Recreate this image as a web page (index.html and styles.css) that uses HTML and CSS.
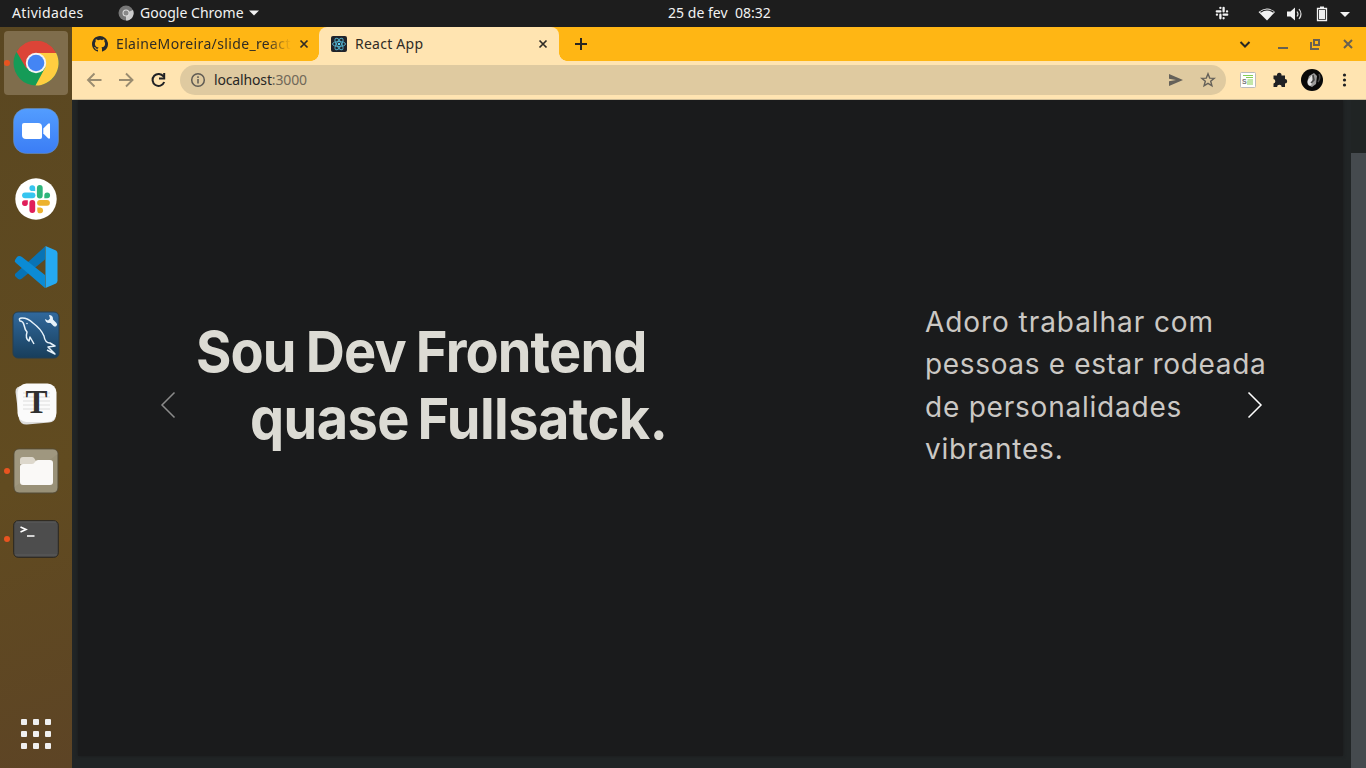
FILE: index.html
```html
<!DOCTYPE html>
<html lang="pt-BR">
<head>
<meta charset="utf-8">
<title>React App</title>
<link rel="stylesheet" href="styles.css">
</head>
<body>
<div class="desktop">
  <header class="topbar">
    <span class="activities">Atividades</span>
    <span class="app-menu">
      <svg width="16" height="16" viewBox="0 0 16 16"><circle cx="8" cy="8" r="7.500" fill="#777"/><path d="M8 8 15 5A7.500 7.500 0 0 1 8 15.500Z" fill="#ccc"/><circle cx="8" cy="8" r="3.500" fill="#ddd"/><circle cx="8" cy="8" r="2.500" fill="#888"/></svg>
      <span class="app-name">Google Chrome</span>
      <svg width="10" height="6" viewBox="0 0 10 6"><path d="M0 .5h10L5 5.500Z" fill="#f2f2f2"/></svg>
    </span>
    <span class="clock">25 de fev&nbsp; 08:32</span>
    <svg class="tray" width="138" height="20" viewBox="0 0 138 20">
      <g stroke="#f2f2f2" stroke-width="2.300" stroke-linecap="round"><path d="M6.400 7.400H2.800M6.400 3.800v.1M9.600 3.800v3.600M13 7.400h.1M9.600 10.700h3.600M9.600 14.300v-.1M6.400 10.700v3.600M3 10.700h-.1"/></g>
      <path d="M44.500 8Q53 1 61 8L53 16.500Z" fill="#f2f2f2"/><path d="M46.500 8.200Q53 3.800 59.500 8.200" fill="none" stroke="#1d1d1d" stroke-width="1.200"/>
      <path d="M73 7.500h3.500L81 3.500v13L76.500 12.500H73Z" fill="#f2f2f2"/><path d="M83 7.500q2 2.500 0 5M85 5q4 5 0 10" fill="none" stroke="#ddd" stroke-width="1.200"/>
      <path d="M103.500 4.500h9v12h-9ZM106 3.200h4" fill="none" stroke="#f2f2f2" stroke-width="1.300"/><path d="M105 6h6v9h-6Z" fill="#eee"/>
      <path d="M126 8h10l-5 5Z" fill="#f2f2f2"/>
    </svg>
  </header>
  <div class="workspace">
    <nav class="dock">
      <div class="slot active"><i class="dot"></i>
        <svg width="46" height="46" viewBox="0 0 46 46"><circle cx="23" cy="23" r="22.500" fill="#159b57"/><path d="M3.500 11.800A22.500 22.500 0 0 1 42.500 11.800L43 13H23L13.400 28.500Z" fill="#dc4437"/><path d="M23 13h20.200A22.500 22.500 0 0 1 22.500 45.500L32.500 27Z" fill="#ffcd40"/><circle cx="23" cy="23" r="10.200" fill="#f4f4f4"/><circle cx="23" cy="23" r="8.300" fill="#4485f4"/></svg>
      </div>
      <div class="slot">
        <svg width="46" height="46" viewBox="0 0 46 46"><defs><linearGradient id="zoom" x2="0" y2="1"><stop stop-color="#539dff"/><stop offset="1" stop-color="#3b7df5"/></linearGradient></defs><rect x=".5" y=".5" width="45" height="45" rx="13" fill="url(#zoom)" stroke="#6d8fb4" stroke-width=".6"/><path d="M11 15h14q4 0 4 4v10q0 2-2 2H13q-4 0-4-4V17q0-2 2-2Z" fill="#fff"/><path d="m30.300 20.500 5-5h1.700v15h-1.700l-5-5Z" fill="#fff"/></svg>
      </div>
      <div class="slot">
        <svg width="42" height="42" viewBox="0 0 42 42"><circle cx="21" cy="21" r="20.700" fill="#fff"/><g stroke-width="5.800" stroke-linecap="round"><path d="M10 17.300h7.500" stroke="#36c5f0"/><path d="M24.800 10v7.500" stroke="#2eb67d"/><path d="M17.300 25v7" stroke="#e01e5a"/><path d="M25 24.800h7" stroke="#ecb22e"/></g><path d="M20.200 10v3.100h-2.900a2.900 2.900 0 1 1 2.900-3.100Z" fill="#36c5f0"/><path d="M29.300 20.200v-2.900a2.900 2.900 0 1 1 2.900 2.900Z" fill="#2eb67d"/><path d="M12.800 22.300v2.500a2.900 2.900 0 1 1-2.900-2.500Z" fill="#e01e5a"/><path d="M22.300 29.500h2.500a2.900 2.900 0 1 1-2.500 2.900Z" fill="#ecb22e"/></svg>
      </div>
      <div class="slot">
        <svg width="44" height="44" viewBox="0 0 44 44"><path d="M1 29 31 1.500v13L8 33.500Q5 35.500 3 33L1 31Z" fill="#0873b5"/><path d="m1 15 2-3q2-2 5 0l23 18v13L2 18Q0 16.500 1 15Z" fill="#0b8bd5"/><path d="M31.500 1 42 5.500q1.500 1 1.500 3v27q0 2-1.500 3L31.500 43Z" fill="#25a9f2"/></svg>
      </div>
      <div class="slot">
        <svg width="48" height="48" viewBox="0 0 48 48"><defs><linearGradient id="sea" x2="0" y2="1"><stop stop-color="#31699d"/><stop offset="1" stop-color="#183e5b"/></linearGradient></defs><rect x="1" y="1" width="46" height="46" rx="5" fill="url(#sea)" stroke="#263f50"/><path d="M22 33l-4-7-1 4q-4-2-2-9-2-2-3-7-1-4-4-4Q6 7 10 7q6 0 11 5 8 6 11 13 1 7 6 7l5 3-7 1 7 7-8-4" fill="none" stroke="#e7f2fa" stroke-width="1.500" stroke-linejoin="round"/><circle cx="15" cy="12.500" r=".8" fill="#e7f2fa"/><path d="m39.500 10 3.500 3.500" stroke="#e7f2fa" stroke-width="4" stroke-linecap="round"/><path d="M37 4q4 0 4 4 0 4-4 4-3.500 0-4-4l3 1.500 2-2Z" fill="#e7f2fa"/></svg>
      </div>
      <div class="slot">
        <svg width="44" height="44" viewBox="0 0 44 44"><path d="M9 5 33 7l9 28q-1 6-7 6.500L13 43.500Q7 44 5 38L1.500 11Q1 5 9 5Z" fill="#ddd"/><rect x="3.500" y="2.500" width="39" height="38.500" rx="9" fill="#fbfbfb"/><path d="M9 12h27M9 16h27M9 20h27M9 24h27M9 28h27" stroke="#ddd"/><text x="22.500" y="32" class="serif-mark">T</text></svg>
      </div>
      <div class="slot"><i class="dot"></i>
        <svg width="46" height="46" viewBox="0 0 46 46"><rect x="1" y="1" width="44" height="44" rx="5" fill="#999178" stroke="#534a36"/><path d="M1.500 39V6q0-4.500 4.500-4.500h34q4.500 0 4.500 4.500Z" fill="#a49b84" opacity=".6"/><path d="M7 16v-4q0-3 3-3h9q1 0 2 1l2 3v4Z" fill="#ddd8cc"/><path d="M7 19q0-3 3-3h9q2 0 3-2 1-2 3-2h12q3 0 3 3v19q0 3-3 3H10q-3 0-3-3Z" fill="#faf9f7"/></svg>
      </div>
      <div class="slot"><i class="dot"></i>
        <svg width="46" height="38" viewBox="0 0 46 38"><rect x=".7" y=".7" width="44.600" height="36.600" rx="4.500" fill="#4d4d4d" stroke="#282621"/><path d="M2 35h42M3 2h40" stroke="#656565" stroke-width=".6"/><path d="m7.500 7 5.500 2.500L7.500 12M14 16h7.500" fill="none" stroke="#fff" stroke-width="1.600"/></svg>
      </div>
      <div class="app-grid"><b></b><b></b><b></b><b></b><b></b><b></b><b></b><b></b><b></b></div>
    </nav>
    <main class="browser">
      <div class="tabs">
        <div class="tab first">
          <svg width="16" height="16" viewBox="0 0 16 16"><path fill="#24292f" d="M8 0C3.580 0 0 3.580 0 8c0 3.540 2.290 6.530 5.470 7.590.4.070.55-.17.55-.38 0-.19-.01-.82-.01-1.490-2.010.37-2.530-.49-2.690-.94-.09-.23-.48-.94-.82-1.130-.28-.15-.68-.52-.01-.53.63-.01 1.080.58 1.230.82.72 1.210 1.870.87 2.330.66.070-.52.28-.87.51-1.070-1.780-.2-3.640-.89-3.640-3.950 0-.87.31-1.590.82-2.150-.08-.2-.36-1.020.08-2.120 0 0 .67-.21 2.200.82A7.600 7.600 0 0 1 8 3.860c.68 0 1.360.09 2 .27 1.530-1.040 2.200-.82 2.200-.82.44 1.100.16 1.920.08 2.120.51.560.82 1.270.82 2.150 0 3.070-1.870 3.750-3.650 3.950.29.25.54.73.54 1.480 0 1.070-.01 1.930-.01 2.200 0 .21.150.46.55.38A8 8 0 0 0 8 0Z"/></svg>
          <span class="tab-title faded">ElaineMoreira/slide_react</span>
          <svg class="close" width="10" height="10" viewBox="0 0 10 10"><path d="m1.500 1.500 7 7m0-7-7 7" stroke="#302c25" stroke-width="1.700"/></svg>
        </div>
        <div class="tab current">
          <svg width="16" height="16" viewBox="0 0 16 16"><rect width="16" height="16" rx="2" fill="#20232a"/><g fill="none" stroke="#4faac5"><ellipse cx="8" cy="8" rx="6.500" ry="2.500"/><ellipse cx="8" cy="8" rx="6.500" ry="2.500" transform="rotate(60 8 8)"/><ellipse cx="8" cy="8" rx="6.500" ry="2.500" transform="rotate(120 8 8)"/></g><circle cx="8" cy="8" r="1.200" fill="#61dafb"/></svg>
          <span class="tab-title">React App</span>
          <svg class="close" width="10" height="10" viewBox="0 0 10 10"><path d="m1.500 1.500 7 7m0-7-7 7" stroke="#302c25" stroke-width="1.700"/></svg>
        </div>
        <svg class="plus" width="12" height="12" viewBox="0 0 12 12"><path d="M6 0v12M0 6h12" stroke="#292621" stroke-width="2"/></svg>
        <svg class="window-buttons" width="116" height="16" viewBox="0 0 116 16"><path d="m2.500 6 4.500 4.500L11.500 6" fill="none" stroke="#292621" stroke-width="2"/><path d="M40 12h10" stroke="#686052" stroke-width="2"/><path d="M76 4h5v5h-5ZM73 6v7h8" fill="none" stroke="#686052" stroke-width="2"/><path d="m106 4 8 8m0-8-8 8" stroke="#686052" stroke-width="2"/></svg>
      </div>
      <div class="toolbar">
        <svg width="90" height="24" viewBox="0 0 90 24"><g fill="none" stroke="#9a8c70" stroke-width="1.900"><path d="M21.500 12H8m6.500-6.500L8 12l6.500 6.500M39 12h13.500M46 5.500l6.500 6.500-6.500 6.500"/></g><path d="M83.500 8.500A6 6 0 1 0 84.200 14M84.200 5v5.500H79" fill="none" stroke="#202124" stroke-width="2"/></svg>
        <div class="address">
          <svg width="16" height="16" viewBox="0 0 16 16"><circle cx="8" cy="8" r="6.300" fill="none" stroke="#5f5b53" stroke-width="1.500"/><path d="M8 7v4.500M8 4.300V6" stroke="#5f5b53" stroke-width="1.500"/></svg>
          <span class="url">localhost<em>:3000</em></span>
          <svg class="send" width="14" height="12" viewBox="0 0 14 12"><path d="M0 0 14 6 0 12V7.300L7 6 0 4.700Z" fill="#656159"/></svg>
          <svg class="star" width="16" height="16" viewBox="0 0 16 16"><path d="m8 1.800 1.700 4.300 4.500.3-3.500 2.900 1.200 4.500L8 11.300l-3.900 2.500 1.200-4.500-3.500-2.900 4.500-.3Z" fill="none" stroke="#656159" stroke-width="1.400"/></svg>
        </div>
        <svg class="extensions" width="110" height="22" viewBox="0 0 110 22"><rect x=".5" y="3.500" width="15" height="15" rx="1" fill="#fff" stroke="#bbb"/><path d="M3 6.500h10M6 8.500h7M7.500 11h5.500M7 13h6M7 15h6" stroke="#85cf55" stroke-width="1.100"/><text x="2" y="15" class="tiny-mark">S</text><path d="M33.500 6.500H37a2.300 2.300 0 1 1 4.500 0H45V10a2.200 2.200 0 1 1 0 4.400V18h-3.300a2.300 2.300 0 0 0-4.600 0h-3.600v-3.500a2.300 2.300 0 0 0 0-4.500Z" fill="#202124"/><circle cx="72" cy="11" r="11" fill="#080808"/><path d="m67 13 2-6 5-3 3 3-1 8-4 3-4-2Z" fill="#999"/><path d="m68 11 4-5v9l-2 2-2-2Z" fill="#e3e3e3"/><path d="m73 6 1 5-3 3M79 5q2 4-1 8" stroke="#444" fill="none" stroke-width="1.500"/><g fill="#202124"><circle cx="104.500" cy="6" r="1.600"/><circle cx="104.500" cy="11" r="1.600"/><circle cx="104.500" cy="16" r="1.600"/></g></svg>
      </div>
      <div class="viewport">
        <section class="slide">
          <svg class="prev" width="16" height="28" viewBox="0 0 16 28"><path d="M14.500 1.500 2 14l12.500 12.500" fill="none" stroke="#8b8b8b" stroke-width="1.500"/></svg>
          <h1><span class="h-one">Sou Dev Frontend</span><span class="h-two">quase Fullsatck.</span></h1>
          <p><span class="p-one">Adoro trabalhar com</span><span class="p-two">pessoas e estar rodeada</span><span class="p-three">de personalidades</span><span class="p-four">vibrantes.</span></p>
          <svg class="next" width="16" height="28" viewBox="0 0 16 28"><path d="M1.500 1.500 14 14 1.500 26.500" fill="none" stroke="#fff" stroke-width="1.500"/></svg>
        </section>
        <div class="scrollbar"><div class="thumb"></div></div>
      </div>
    </main>
  </div>
</div>
</body>
</html>
```
FILE: styles.css
```css
* { box-sizing: border-box; }
body { margin: 0; overflow: hidden; font-family: "Noto Sans", "Open Sans", sans-serif; }
svg { display: block; flex: none; }
.desktop { width: 1366px; height: 768px; display: flex; flex-direction: column; background: #1d1d1d; }
.topbar { flex: 0 0 27px; display: flex; align-items: center; color: #f2f2f2; font-size: 14px; line-height: 24px; padding: 0 12px; white-space: nowrap; }
.topbar > span { margin-bottom: 1px; }
.activities { width: 106px; letter-spacing: .35px; }
.app-menu { display: flex; align-items: center; gap: 6px; }
.app-name { width: 103px; letter-spacing: .02px; }
.clock { margin-left: 409px; letter-spacing: .03px; }
.tray { margin-left: auto; margin-right: 2px; }
.workspace { display: flex; flex: 1; min-height: 0; }
.dock { width: 72px; display: flex; flex-direction: column; align-items: center; gap: 4px; padding-top: 4px; background: linear-gradient(160deg, #5a4721, #614b20 60%, #5d4425); }
.slot { position: relative; width: 64px; height: 64px; display: flex; align-items: center; justify-content: center; border-radius: 4px; }
.active { background: #7f6d4c; }
.dot { position: absolute; left: 0; top: 29px; width: 6px; height: 6px; border-radius: 50%; background: #e95420; }
.serif-mark { font: bold 33px "Liberation Serif", serif; text-anchor: middle; fill: #303030; }
.tiny-mark { font: bold 7px "Liberation Sans", sans-serif; fill: #777; }
.app-grid { margin-top: auto; margin-bottom: 19px; display: grid; grid-template-columns: repeat(3, 6px); gap: 6px; }
.app-grid b { width: 6px; height: 6px; border-radius: 1px; background: #f0f0f0; }
.browser { flex: 1; min-width: 0; display: flex; flex-direction: column; }
.tabs { flex: 0 0 34px; display: flex; align-items: center; background: #ffb614; }
.tab { height: 34px; display: flex; align-items: center; gap: 8px; font-size: 14px; color: #302c25; white-space: nowrap; }
.first { width: 247px; padding-left: 20px; padding-right: 10px; background: radial-gradient(circle at 0 0, #ffb614 7.5px, #ffe4b1 8px) right bottom / 8px 8px no-repeat; }
.current { position: relative; width: 240px; padding: 0 11px 0 12px; background: #ffe4b1; border-radius: 8px 8px 0 0; }
.current::after { content: ""; position: absolute; bottom: 0; right: -8px; width: 8px; height: 8px; background: radial-gradient(circle at 100% 0, #ffb614 7.5px, #ffe4b1 8px); }
.tab-title { overflow: hidden; margin-bottom: 2px; letter-spacing: .25px; }
.faded { width: 175px; -webkit-mask-image: linear-gradient(to right, #000 86%, transparent); mask-image: linear-gradient(to right, #000 86%, transparent); letter-spacing: .36px; }
.close { margin-left: auto; }
.plus { margin-left: 16px; }
.window-buttons { margin-left: auto; margin-right: 12px; }
.toolbar { flex: 0 0 39px; display: flex; align-items: center; background: #ffe4b1; border-bottom: 1px solid #cdbc98; padding-left: 8px; }
.address { width: 1046px; height: 30px; margin-left: 10px; display: flex; align-items: center; background: #dfcaa0; border-radius: 15px; padding: 0 10px; color: #282725; font-size: 14px; }
.url { margin-left: 8px; margin-bottom: 2px; letter-spacing: -.15px; }
.url em { font-style: normal; color: #716858; }
.send { margin-left: auto; }
.star { margin-left: 17px; }
.extensions { margin-left: 14px; }
.viewport { flex: 1; min-height: 0; display: flex; justify-content: space-between; padding-left: 6px; background: #212526; overflow: hidden; }
.slide { width: 1265px; height: 656px; display: flex; align-items: flex-start; background: #1a1b1c; box-shadow: 0 0 3px #1a1b1c; }
.prev { margin: 291px 0 0 82px; }
h1 { width: 729px; margin: 218px 0 0 20px; font: 700 57px/67px Inter, sans-serif; color: #dcdbd4; white-space: nowrap; }
h1 span, p span { display: block; width: max-content; }
h1 span { transform: scaleX(.95); transform-origin: left center; }
.h-one { letter-spacing: -.95px; word-spacing: -2px; }
.h-two { margin-left: 54px; letter-spacing: -.6px; word-spacing: -4px; }
p { width: 322px; margin: 201px 0 0; font: 400 28px/42.3px Inter, sans-serif; color: #cbc8c4; white-space: nowrap; }
.p-one { letter-spacing: .93px; }
.p-two { letter-spacing: .65px; }
.p-three { letter-spacing: .78px; }
.p-four { letter-spacing: .8px; }
.next { margin-top: 291px; }
.scrollbar { width: 15px; padding-top: 53px; background: #202424; }
.thumb { height: 615px; background: #454a4e; }
```
